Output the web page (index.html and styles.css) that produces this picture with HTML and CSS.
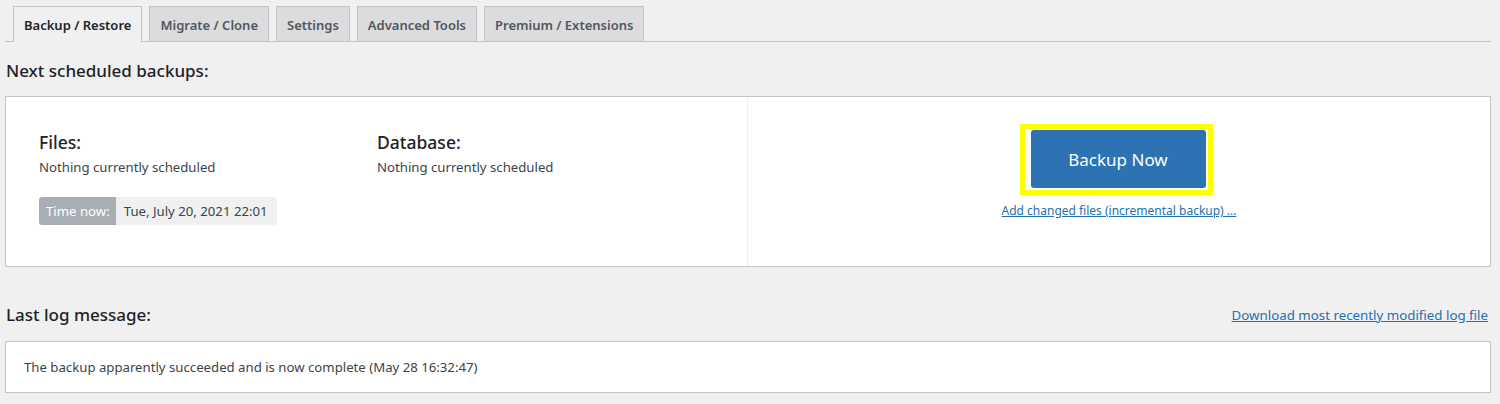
FILE: index.html
```html
<!DOCTYPE html>
<html>
<head>
<meta charset="utf-8">
<link rel="stylesheet" href="styles.css">
</head>
<body>
<div class="page">
  <nav class="tabs">
    <a class="tab active">Backup / Restore</a>
    <a class="tab">Migrate / Clone</a>
    <a class="tab">Settings</a>
    <a class="tab">Advanced Tools</a>
    <a class="tab">Premium / Extensions</a>
  </nav>

  <h2 class="section-title first">Next scheduled backups:</h2>
  <div class="schedule-box">
    <div class="schedule-left">
      <div class="cols">
        <div class="col">
          <h3 class="col-title">Files:</h3>
          <div class="col-text">Nothing currently scheduled</div>
        </div>
        <div class="col">
          <h3 class="col-title">Database:</h3>
          <div class="col-text">Nothing currently scheduled</div>
        </div>
      </div>
      <div class="time-badge"><span class="time-label">Time now:</span><span class="time-value">Tue, July 20, 2021 22:01</span></div>
    </div>
    <div class="schedule-right">
      <div class="highlight"><button class="backup-btn">Backup Now</button></div>
      <a class="incr-link">Add changed files (incremental backup) ...</a>
    </div>
  </div>

  <div class="log-head">
    <h2 class="section-title">Last log message:</h2>
    <a class="download-link">Download most recently modified log file</a>
  </div>
  <div class="log-box">The backup apparently succeeded and is now complete (May 28 16:32:47)</div>
</div>
</body>
</html>
```

FILE: styles.css
```css
html, body {
  margin: 0;
  padding: 0;
  background: #f0f0f1;
}
body {
  font-family: "Noto Sans", "Open Sans", sans-serif;
  font-size: 13px;
  color: #3c434a;
}
.page {
  padding: 6px 9px 0 5px;
}
.tabs {
  display: flex;
  gap: 7px;
  padding-left: 8px;
  border-bottom: 1px solid #c3c4c7;
  height: 35px;
}
.tab {
  display: flex;
  align-items: center;
  height: 35px;
  box-sizing: border-box;
  padding: 1px 10px 0;
  border: 1px solid #c3c4c7;
  border-bottom: none;
  background: #dcdcde;
  color: #50575e;
  font-size: 13px;
  font-weight: 600;
  white-space: nowrap;
}
.tab.active {
  background: #f0f0f1;
  color: #1d2327;
  height: 36px;
}
.section-title {
  margin: 0;
  font-size: 17px;
  font-weight: 500;
  color: #1d2327;
  line-height: 22px;
}
.section-title.first {
  margin: 18px 0 0 1px;
}
.schedule-box {
  margin-top: 14px;
  display: flex;
  height: 171px;
  box-sizing: border-box;
  background: #fff;
  border: 1px solid #c3c4c7;
}
.schedule-left {
  width: 742px;
  border-right: 1px solid #eeeeee;
  padding: 32px 0 0 33px;
  box-sizing: border-box;
}
.cols {
  display: flex;
}
.col {
  width: 338px;
}
.col-title {
  margin: 0;
  font-size: 17.5px;
  font-weight: 500;
  color: #1d2327;
  line-height: 26px;
}
.col-text {
  font-size: 13.2px;
  line-height: 20px;
  margin-top: 2px;
}
.time-badge {
  display: inline-flex;
  margin-top: 20px;
  height: 28px;
  border-radius: 3px;
  overflow: hidden;
  font-size: 13.2px;
  line-height: 28px;
}
.time-label {
  background: #a9aeb4;
  color: #fff;
  padding: 0 6px 0 7px;
}
.time-value {
  background: #f0f0f1;
  color: #3c434a;
  padding: 0 9px 0 8px;
}
.schedule-right {
  flex: 1;
  display: flex;
  flex-direction: column;
  align-items: center;
  padding-top: 27px;
}
.highlight {
  border: 5px solid #ffff00;
  padding: 1px 2px 2px 6px;
  margin-right: 6px;
}
.backup-btn {
  display: block;
  width: 175px;
  height: 58px;
  border: none;
  border-radius: 3px;
  background: #2d72b2;
  color: #fff;
  font-family: inherit;
  font-size: 17px;
  padding: 0;
}
.incr-link {
  margin-top: 8px;
  color: #2271b1;
  text-decoration: underline;
  font-size: 12px;
  line-height: 16px;
}
.log-head {
  display: flex;
  justify-content: space-between;
  align-items: center;
  margin-top: 37px;
  padding-left: 1px;
  padding-right: 3px;
}
.download-link {
  color: #2271b1;
  text-decoration: underline;
  font-size: 13.3px;
}
.log-box {
  margin-top: 15px;
  height: 52px;
  box-sizing: border-box;
  background: #fff;
  border: 1px solid #c3c4c7;
  padding: 0 18px;
  display: flex;
  align-items: center;
  font-size: 13.2px;
}
```
